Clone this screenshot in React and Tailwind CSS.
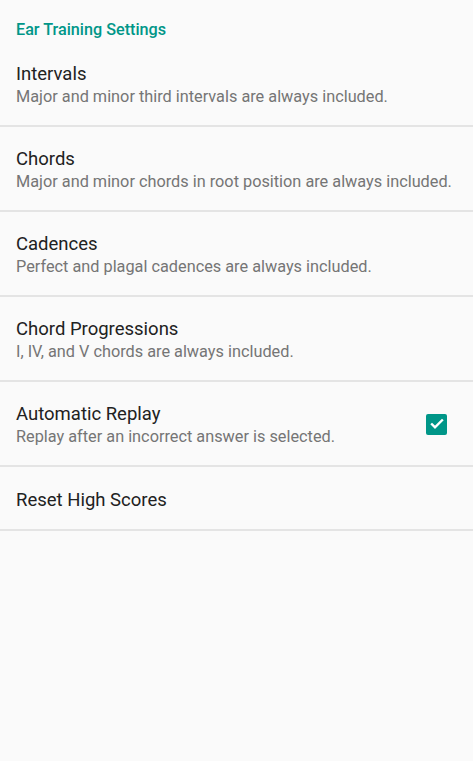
import React from 'react';

const items = [
  { title: 'Intervals', summary: 'Major and minor third intervals are always included.' },
  { title: 'Chords', summary: 'Major and minor chords in root position are always included.' },
  { title: 'Cadences', summary: 'Perfect and plagal cadences are always included.' },
  { title: 'Chord Progressions', summary: 'I, IV, and V chords are always included.' },
  { title: 'Automatic Replay', summary: 'Replay after an incorrect answer is selected.', checkbox: true },
];

const CheckBox = () => (
  <div className="w-[21px] h-[21px] -mt-[3px] rounded-[2px] bg-[#009688] flex items-center justify-center shrink-0">
    <svg width="16" height="16" viewBox="0 0 24 24" fill="none" stroke="white" strokeWidth="3.6" strokeLinecap="square">
      <path d="M4.5 12.5l4.5 4.5L19.5 6.5" />
    </svg>
  </div>
);

export default function App() {
  return (
    <div className="min-h-[761px] w-full bg-[#fafafa] font-['Roboto',sans-serif]">
      {/* Category header */}
      <div className="h-[42px] pt-[20px] px-4">
        <p className="text-[16.2px] leading-[20px] font-medium text-[#009688]">Ear Training Settings</p>
      </div>

      {items.map(item => (
        <div
          key={item.title}
          className="h-[85px] border-b-2 border-[#e4e4e4] flex items-center justify-between pl-4 pr-[26px] pt-[4px]"
        >
          <div className="whitespace-nowrap">
            <p className="text-[18.5px] leading-[22px] text-[#212121]">{item.title}</p>
            <p className="text-[16.3px] leading-[22px] text-[#757575] mt-[1px]">{item.summary}</p>
          </div>
          {item.checkbox && <CheckBox />}
        </div>
      ))}

      <div className="h-[64px] border-b-2 border-[#e4e4e4] flex items-center px-4 pt-[4px]">
        <p className="text-[18.5px] leading-[22px] text-[#212121]">Reset High Scores</p>
      </div>
    </div>
  );
}
